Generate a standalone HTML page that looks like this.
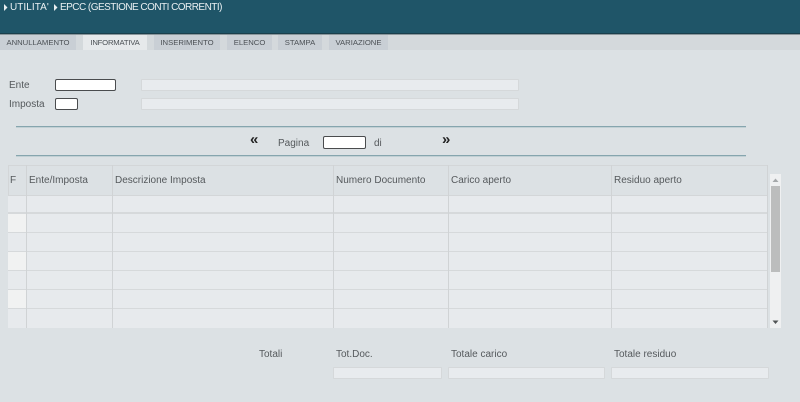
<!DOCTYPE html>
<html><head><meta charset="utf-8"><style>
html,body{margin:0;padding:0;width:800px;height:402px;overflow:hidden;background:#dce1e4}
body{position:relative;font-family:"Liberation Sans",sans-serif;color:#55595c}
div,span{position:absolute;box-sizing:border-box}
.t{white-space:nowrap;font-size:10px;line-height:12px;color:#55595c}
.tab{top:35px;height:15px;background:#c9cfd5;font-size:7.7px;line-height:15px;text-align:center;color:#4c5156;white-space:nowrap}
.in{background:#fff;border:1px solid #4a4c4e;border-radius:2px}
.ro{background:#e8ebee;border:1px solid #d5d8da;border-radius:1px}
.hr{left:16px;width:730px;height:1px;background:#86a5ae;box-shadow:0 .5px 0 #a9bec4}
.v{top:165px;height:163px;width:1px;background:#d0d3d5}
.h{left:8px;width:760px;height:1px;background:#d6d9db}
.f{left:8px;width:18px;background:#f1f2f2}
</style></head><body>
<div style="left:0;top:0;width:800px;height:34px;background:#1f5568;border-bottom:1px solid #1a3f4c"></div>
<div style="left:0;top:34px;width:800px;height:1px;background:#8b979c"></div>
<div style="left:0;top:35px;width:800px;height:15px;background:#d4d9dc"></div>
<svg style="position:absolute;left:4px;top:4px" width="4" height="7"><path d="M0 0L3.5 3.5L0 7Z" fill="#e8eef0"/></svg>
<span class="t" style="left:10px;top:2px;font-size:10px;color:#eaf0f2;letter-spacing:.05px">UTILITA'</span>
<svg style="position:absolute;left:54px;top:4px" width="4" height="7"><path d="M0 0L3.5 3.5L0 7Z" fill="#e8eef0"/></svg>
<span class="t" style="left:60px;top:2px;font-size:10px;color:#eaf0f2;letter-spacing:-.53px">EPCC (GESTIONE CONTI CORRENTI)</span>

<div class="tab" style="left:0;width:76px">ANNULLAMENTO</div>
<div class="tab" style="left:83px;width:64px;background:#e6e9eb;letter-spacing:-.2px">INFORMATIVA</div>
<div class="tab" style="left:154px;width:66px">INSERIMENTO</div>
<div class="tab" style="left:227px;width:45px">ELENCO</div>
<div class="tab" style="left:278px;width:44px">STAMPA</div>
<div class="tab" style="left:329px;width:59px">VARIAZIONE</div>

<span class="t" style="left:9px;top:80px">Ente</span>
<div class="in" style="left:55px;top:79px;width:61px;height:12px"></div>
<div class="ro" style="left:141px;top:79px;width:378px;height:12px"></div>
<span class="t" style="left:9px;top:99px">Imposta</span>
<div class="in" style="left:55px;top:98px;width:23px;height:12px"></div>
<div class="ro" style="left:141px;top:98px;width:378px;height:12px"></div>

<div class="hr" style="top:126px"></div>
<div class="hr" style="top:155px"></div>
<span class="t" style="left:250px;top:134px;font-size:15px;font-weight:bold;color:#222">«</span>
<span class="t" style="left:278px;top:138px">Pagina</span>
<div class="in" style="left:323px;top:136px;width:43px;height:13px"></div>
<span class="t" style="left:374px;top:138px">di</span>
<span class="t" style="left:442px;top:134px;font-size:15px;font-weight:bold;color:#222">»</span>

<div style="left:8px;top:165px;width:760px;height:31px;background:#dce1e4;border:1px solid #d3d6d8;border-bottom:1px solid #d3d6d8"></div>
<div style="left:8px;top:196px;width:760px;height:132px;background:#e7eaed"></div>
<div class="f" style="top:214px;height:18px"></div>
<div class="f" style="top:252px;height:18px"></div>
<div class="f" style="top:290px;height:18px"></div>
<div class="h" style="top:212px;height:2px"></div>
<div class="h" style="top:232px"></div>
<div class="h" style="top:251px"></div>
<div class="h" style="top:270px"></div>
<div class="h" style="top:289px"></div>
<div class="h" style="top:308px"></div>
<div class="v" style="left:26px"></div>
<div class="v" style="left:112px"></div>
<div class="v" style="left:333px"></div>
<div class="v" style="left:448px"></div>
<div class="v" style="left:611px"></div>
<div class="v" style="left:767px"></div>

<span class="t" style="left:10px;top:175px">F</span>
<span class="t" style="left:29px;top:175px">Ente/Imposta</span>
<span class="t" style="left:115px;top:175px">Descrizione Imposta</span>
<span class="t" style="left:336px;top:175px">Numero Documento</span>
<span class="t" style="left:451px;top:175px">Carico aperto</span>
<span class="t" style="left:614px;top:175px">Residuo aperto</span>

<div style="left:770px;top:174px;width:11px;height:154px;background:#eff0f1"></div>
<div style="left:771px;top:186px;width:9px;height:86px;background:#bcbdbd"></div>
<svg style="position:absolute;left:772px;top:178px" width="7" height="5"><path d="M3.5 0.5L6.5 4H0.5Z" fill="#a5a8aa"/></svg>
<svg style="position:absolute;left:772px;top:320px" width="7" height="5"><path d="M0.5 0.5H6.5L3.5 4Z" fill="#505355"/></svg>

<span class="t" style="left:259px;top:349px">Totali</span>
<span class="t" style="left:336px;top:349px">Tot.Doc.</span>
<span class="t" style="left:451px;top:349px">Totale carico</span>
<span class="t" style="left:614px;top:349px">Totale residuo</span>
<div class="ro" style="left:333px;top:367px;width:109px;height:12px"></div>
<div class="ro" style="left:448px;top:367px;width:157px;height:12px"></div>
<div class="ro" style="left:611px;top:367px;width:158px;height:12px"></div>
</body></html>
